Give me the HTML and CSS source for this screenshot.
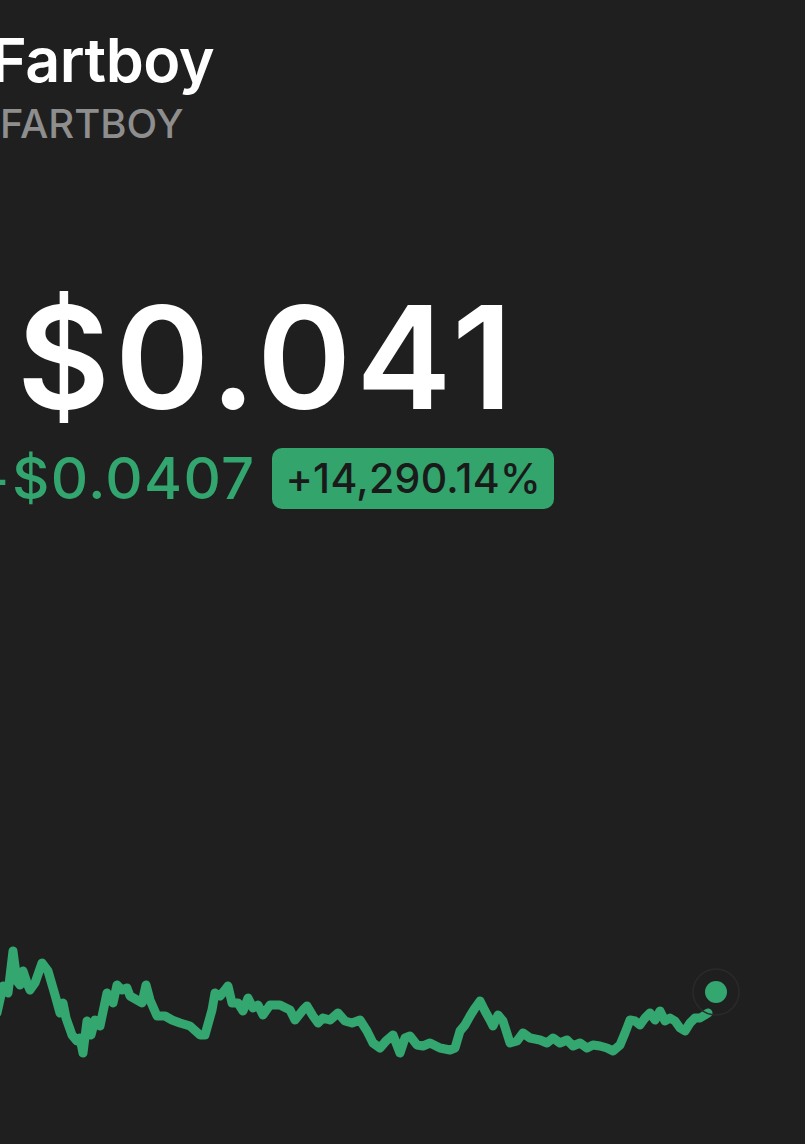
FILE: index.html
```html
<!DOCTYPE html>
<html>
<head>
  <title>Fartboy</title>
  <link rel="stylesheet" href="styles.css">
</head>
<body>
  <div id="page">
    <div id="header">
      <h1 id="coinName">Fartboy</h1>
      <div id="coinTicker">FARTBOY</div>
    </div>

    <div id="priceBox">
      <div id="price">$0.041</div>
      <div id="changeRow">
        <span id="changeValue">+$0.0407</span>
        <span id="changeBadge">+14,290.14%</span>
      </div>
    </div>

    <div id="chart">
      <svg width="805" height="140" viewBox="0 0 805 140">
        <path class="line" d="M-3 80 L3 53 L8 60 L13 18 L17 48 L20 52 L23 38 L27 50 L30 57 L35 50 L42 30 L48 38 L55 62 L60 80 L63 70 L66 85 L72 102 L77 108 L80 105 L83 120 L87 88 L91 102 L95 87 L100 93 L107 60 L113 70 L117 52 L122 57 L127 55 L130 63 L137 67 L142 70 L146 52 L150 67 L157 83 L165 83 L172 87 L180 90 L190 93 L200 102 L205 102 L212 77 L215 60 L220 63 L225 57 L228 53 L232 70 L238 70 L243 78 L248 65 L253 75 L258 72 L263 82 L270 72 L280 72 L290 77 L295 87 L303 77 L307 73 L313 83 L318 90 L323 85 L330 87 L338 80 L345 88 L352 90 L360 87 L367 98 L373 110 L380 115 L386 108 L393 102 L400 120 L405 105 L410 103 L417 112 L423 113 L430 110 L440 115 L450 117 L455 115 L460 98 L465 92 L470 83 L475 75 L480 68 L485 78 L490 87 L493 93 L498 82 L503 88 L510 110 L517 108 L523 100 L530 105 L540 107 L547 110 L553 105 L560 110 L567 107 L573 113 L580 110 L587 115 L593 112 L600 113 L607 115 L613 118 L620 112 L625 100 L630 87 L635 88 L640 92 L645 85 L650 80 L655 87 L660 78 L665 88 L670 85 L675 88 L680 95 L685 98 L690 90 L695 85 L700 85 L705 82 L708 80" />
        <circle class="ring" cx="716" cy="59" r="23" />
        <circle class="dot" cx="716" cy="59" r="11" />
      </svg>
    </div>
  </div>
</body>
</html>
```

FILE: styles.css
```css
html, body { margin: 0; padding: 0; }

body
{
    background: #1f1f1f;
    overflow: hidden;
    font-family: Inter, "Noto Sans", sans-serif;
    color: white;
}

#page
{
    width: 805px;
    height: 1144px;
    padding-top: 20px;
    box-sizing: border-box;
}

#coinName
{
    margin: 0 0 0 -9px;
    font-size: 61px;
    font-weight: 600;
    line-height: 80px;
    letter-spacing: -0.5px;
}

#coinTicker
{
    margin-left: 0;
    font-size: 40px;
    font-weight: 500;
    line-height: 48px;
    color: #8e8e8e;
}

#priceBox
{
    margin-top: 134px;
}

#price
{
    margin-left: 17px;
    font-size: 143px;
    font-weight: 600;
    line-height: 150px;
    letter-spacing: 5px;
}

#changeRow
{
    display: flex;
    align-items: center;
    gap: 17px;
    margin-left: -28px;
    margin-top: 11px;
}

#changeValue
{
    font-size: 58px;
    font-weight: 500;
    color: #33a56e;
    letter-spacing: 1.3px;
}

#changeBadge
{
    background: #32a46c;
    color: #1a1a1a;
    font-size: 41px;
    font-weight: 500;
    padding: 7px 13px;
    border-radius: 10px;
    line-height: 47px;
    letter-spacing: 0.3px;
}

#chart
{
    margin-top: 420px;
}

#chart svg
{
    display: block;
}

.line
{
    fill: none;
    stroke: #34a66f;
    stroke-width: 9;
    stroke-linejoin: round;
    stroke-linecap: round;
}

.ring
{
    fill: none;
    stroke: #2a2a2a;
    stroke-width: 1.5;
}

.dot
{
    fill: #34a66f;
}
```
